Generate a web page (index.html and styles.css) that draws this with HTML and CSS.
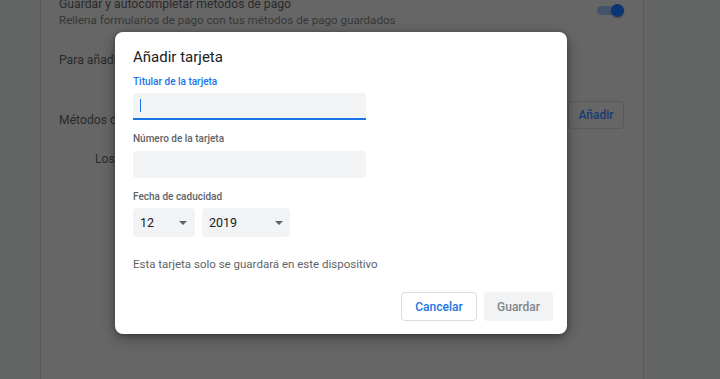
FILE: index.html
```html
<!DOCTYPE html>
<html lang="es">
<head>
<meta charset="utf-8">
<title>Añadir tarjeta</title>
<link rel="stylesheet" href="styles.css">
</head>
<body>
<div class="page">
  <div class="gutter"></div>
  <main class="card">
    <div class="row row-toggle">
      <div class="row-text">
        <div class="primary">Guardar y autocompletar métodos de pago</div>
        <div class="secondary">Rellena formularios de pago con tus métodos de pago guardados</div>
      </div>
      <span class="toggle"><span class="track"></span><span class="knob"></span></span>
    </div>
    <div class="row row-signin">
      <div class="primary">Para añadir métodos de pago de Google Pay, inicia sesión</div>
    </div>
    <div class="row row-methods">
      <div class="primary heading">Métodos de pago</div>
      <span class="bg-btn">Añadir</span>
    </div>
    <div class="empty">Los métodos de pago guardados aparecerán aquí</div>
  </main>
  <div class="gutter"></div>
</div>

<div class="dialog" role="dialog">
  <div class="dialog-title">Añadir tarjeta</div>
  <div class="field-label first active">Titular de la tarjeta</div>
  <div class="text-input focused"><span class="caret"></span></div>
  <div class="field-label">Número de la tarjeta</div>
  <div class="text-input"></div>
  <div class="field-label">Fecha de caducidad</div>
  <div class="selects">
    <div class="select month"><span>12</span><span class="arrow"></span></div>
    <div class="select year"><span>2019</span><span class="arrow"></span></div>
  </div>
  <div class="note">Esta tarjeta solo se guardará en este dispositivo</div>
  <div class="footer">
    <span class="btn btn-cancel">Cancelar</span>
    <span class="btn btn-save">Guardar</span>
  </div>
</div>
</body>
</html>
```

FILE: styles.css
```css
* { box-sizing: border-box; }

html, body {
  margin: 0;
  padding: 0;
  width: 720px;
  height: 379px;
  overflow: hidden;
  background: #636464;
  font-family: Roboto, "Liberation Sans", Arial, sans-serif;
}

.page {
  display: flex;
  height: 379px;
}

.gutter {
  flex: 1;
  background: #636464;
}

.gutter:first-child {
  flex: 0 0 40px;
}

.card {
  flex: 0 0 604px;
  background: #666666;
  border-left: 1px solid #585859;
  border-right: 1px solid #585859;
  padding: 0 19px 0 18px;
}

.row {
  display: flex;
  align-items: flex-start;
  justify-content: space-between;
}

.primary {
  font-size: 12.2px;
  line-height: 16px;
  color: #2a2a2a;
  white-space: nowrap;
}

.secondary {
  font-size: 11.6px;
  line-height: 16px;
  color: #373737;
  white-space: nowrap;
}

.row-toggle {
  margin-top: -4px;
}

.toggle {
  position: relative;
  width: 27px;
  height: 13px;
  margin-top: 8px;
  display: flex;
  align-items: center;
}

.track {
  width: 25px;
  height: 9px;
  border-radius: 5px;
  background: #44536a;
}

.knob {
  position: absolute;
  right: 0;
  top: 0;
  width: 13px;
  height: 13px;
  border-radius: 50%;
  background: #0a3573;
  box-shadow: 0 1px 2px rgba(0, 0, 0, 0.3);
}

.row-signin {
  margin-top: 24px;
}

.row-methods {
  margin-top: 33px;
}

.heading {
  margin-top: 11px;
}

.bg-btn {
  width: 56px;
  height: 28px;
  border: 1px solid #5a5b5c;
  border-radius: 4px;
  display: flex;
  align-items: center;
  justify-content: center;
  font-size: 12px;
  font-weight: 500;
  color: #163a74;
}

.empty {
  margin-top: 22px;
  padding-left: 36px;
  font-size: 12.2px;
  line-height: 16px;
  color: #2a2a2a;
  white-space: nowrap;
}

/* Dialog */
.dialog {
  position: absolute;
  left: 115px;
  top: 32px;
  width: 452px;
  height: 302px;
  background: #ffffff;
  border-radius: 8px;
  box-shadow: 0 4px 14px rgba(0, 0, 0, 0.35), 0 1px 4px rgba(0, 0, 0, 0.25);
  padding: 15px 14px 13px 18px;
  display: flex;
  flex-direction: column;
  align-items: flex-start;
}

.dialog-title {
  font-size: 15px;
  line-height: 20px;
  color: #202124;
}

.field-label {
  margin-top: 13px;
  font-size: 10px;
  line-height: 12px;
  font-weight: 500;
  color: #5f6368;
}

.field-label.first {
  margin-top: 9px;
}

.field-label.active {
  color: #1a73e8;
}

.text-input {
  margin-top: 6px;
  width: 233px;
  height: 27px;
  background: #f1f3f4;
  border-radius: 4px;
  padding-left: 7px;
  display: flex;
  align-items: center;
}

.text-input.focused {
  margin-top: 5px;
  border-radius: 4px 4px 0 0;
  border-bottom: 2px solid #1a73e8;
}

.caret {
  width: 1px;
  height: 13px;
  background: #1a73e8;
}

.selects {
  margin-top: 5px;
  display: flex;
  gap: 7px;
}

.select {
  height: 29px;
  background: #f1f3f4;
  border-radius: 4px;
  padding: 0 8px 0 7px;
  display: flex;
  align-items: center;
  justify-content: space-between;
  font-size: 12.5px;
  color: #202124;
}

.select.month { width: 62px; }
.select.year { width: 88px; padding-right: 7px; }

.arrow {
  width: 0;
  height: 0;
  border-left: 4px solid transparent;
  border-right: 4px solid transparent;
  border-top: 4px solid #5f6368;
}

.note {
  margin-top: 19px;
  font-size: 11.5px;
  line-height: 16px;
  color: #5f6368;
}

.footer {
  margin-top: auto;
  align-self: flex-end;
  display: flex;
  gap: 7px;
}

.btn {
  height: 29px;
  border-radius: 4px;
  display: flex;
  align-items: center;
  justify-content: center;
  font-size: 12px;
  font-weight: 500;
}

.btn-cancel {
  width: 76px;
  border: 1px solid #dadce0;
  color: #1a73e8;
  background: #ffffff;
}

.btn-save {
  width: 69px;
  background: #f1f3f4;
  color: #80868b;
}
```
